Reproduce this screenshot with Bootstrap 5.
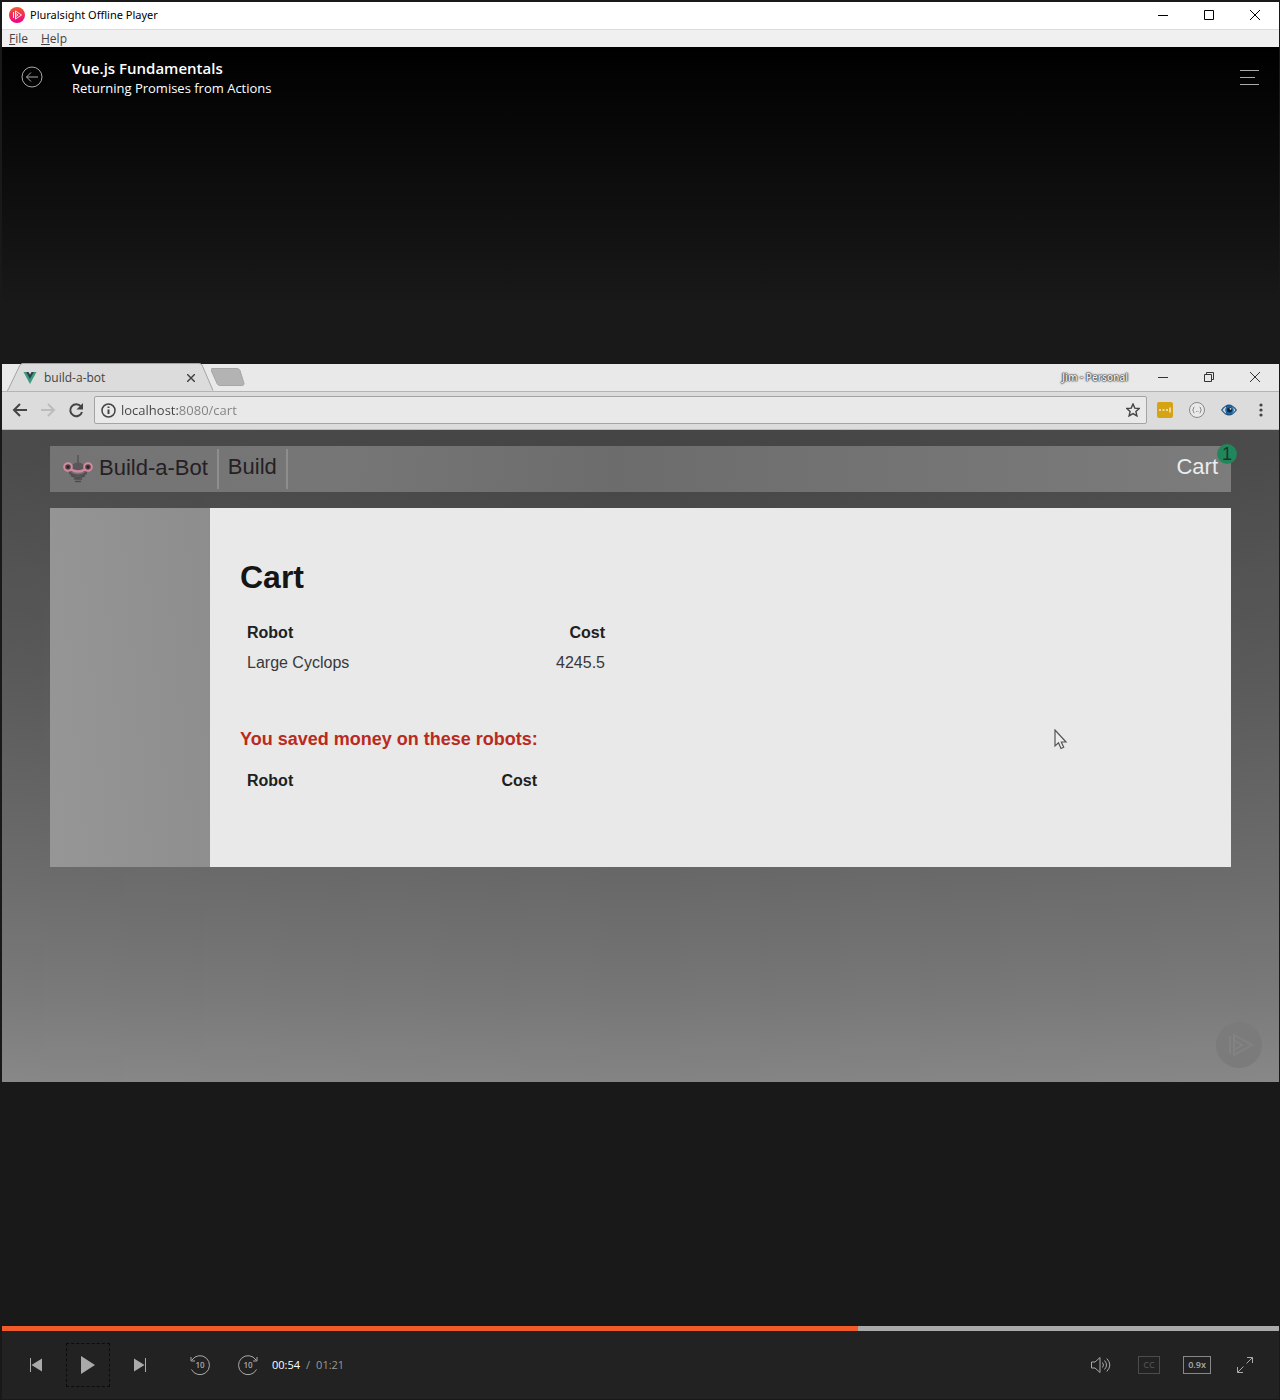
<!DOCTYPE html>
<html lang="en">
<head>
<meta charset="utf-8">
<meta name="viewport" content="width=device-width, initial-scale=1">
<title>Pluralsight Offline Player</title>
<link href="https://cdn.jsdelivr.net/npm/bootstrap@5.3.0/dist/css/bootstrap.min.css" rel="stylesheet">
<style>
  body { background: #191919; font-family: "Open Sans", "Noto Sans", sans-serif; font-size: 12px; line-height: 18px; padding: 2px 1px 1px 2px; }
  svg { display: block; flex: none; }
  button { background: none; border: 0; padding: 0; color: inherit; }
  .ui-btn { display: flex; align-items: center; justify-content: center; flex: none; }

  .titlebar { height: 27px; background: #fff; color: #000; padding: 0 1px 2px 7px; font-family: "Noto Sans", sans-serif; font-size: 11px; gap: 5px; }
  .win-btn { width: 46px; height: 27px; }
  .menubar { height: 18px; background: #f0f0f0; color: #444; border-top: 1px solid #dcdcdc; padding-left: 7px; gap: 13px; line-height: 17px; }
  .menubar a { color: inherit; text-decoration: none; }

  .stage { background: linear-gradient(#000, #191919 260px, #191919); }
  .stage-head, .stage-foot { flex: 1 0 0; }
  .head-row { padding: 11px 18px 0 18px; color: #fff; }
  .course { font-size: 15px; line-height: 20px; font-weight: 600; margin: 0; }
  .clip { font-size: 13px; line-height: 20px; margin: 0; }
  .head-text { margin-left: 28px; }
  .head-icon { width: 24px; height: 24px; margin-top: 7px; }

  .video { aspect-ratio: 16 / 9; background: linear-gradient(90deg, rgba(255,255,255,.03), rgba(255,255,255,0) 50%, rgba(255,255,255,.03)), linear-gradient(#454545, #454545 12%, #565656 45%, #686868 72%, #767676 88%, #848484 100%); }
  .tabstrip { height: 28px; background: #e9e9e9; border-bottom: 1px solid #b4b4b4; color: #444; padding-right: 1px; }
  .tab { width: 204px; height: 28px; margin-left: 5px; padding: 2px 16px 0 16px; }
  .tab-shape { position: absolute; left: 0; top: 0; }
  .tab-body { position: relative; gap: 7px; font-size: 12px; }
  .profile { color: #eee; font-size: 10px; font-weight: 600; text-shadow: 0 0 1px #444, 0 0 1px #444, 0 0 2px #444, 0 0 2px #555; margin-right: 12px; }
  .toolbar { height: 38px; background: #dcdcdc; border-bottom: 1px solid #bbb; color: #444; padding: 0 10px; }
  .tool { width: 16px; height: 16px; }
  .nav-tools { gap: 12px; margin-right: 10px; }
  .ext-tools { gap: 16px; margin-left: 10px; }
  .urlbox { height: 28px; background: #e9e9e9; border: 1px solid #a4a4a4; border-radius: 2px; padding: 0 5px 0 6px; gap: 5px; }
  .urlbox input { border: 0; outline: 0; padding: 0; min-width: 0; font-size: 13px; color: transparent; background: linear-gradient(90deg, #444 58px, #808080 58px); -webkit-background-clip: text; background-clip: text; }

  .page { font-family: "Liberation Sans", Arial, sans-serif; padding: 16px 48px 0; color: #202020; }
  .bot-nav { height: 46px; background: linear-gradient(95deg, #747474, #767676 25%, #6c6c6c 48%, #707070 60%, #7c7c7c); font-size: 22px; line-height: 36px; }
  .bot-nav a { color: #242024; text-decoration: none; }
  .nav-cell { padding: 0 9px; border-right: 2px solid #8e8e8e; height: 40px; }
  .brand-cell { padding-left: 13px; }
  .brand-cell svg { margin: 5px 6px 0 0; }
  .brand-cell span { line-height: 38px; }
  .bot-nav .cart-link { color: #ececec; margin-right: 13px; height: 40px; }
  .count { position: absolute; right: -6px; top: -2px; width: 20px; height: 20px; border-radius: 50%; background: #22865c; color: #16382a; font-size: 18px; line-height: 20px; text-align: center; }
  .bot-main { margin-top: 16px; }
  .side { width: 160px; background: linear-gradient(85deg, #969696, #8d8d8d); }
  .cart-pane { background: #e9e9e9; padding: 50px 30px 71px; }
  .cart-pane h1 { font-size: 32px; line-height: 38px; font-weight: 700; margin: 0 0 22px; color: #151515; }
  .cart-pane h2 { font-size: 18px; line-height: 22px; font-weight: 700; margin: 50px 0 16px; color: #b92a20; }
  .bots { font-size: 16px; line-height: 20px; width: 372px; }
  .bots.saved { width: 304px; }
  .bots th, .bots td { padding: 5px 7px; }
  .bots td { color: #383838; }
  .pointer { position: absolute; left: 82.4%; top: 50.8%; }
  .watermark { position: absolute; right: 17px; bottom: 14px; }

  .stage-foot { display: flex; flex-direction: column; justify-content: flex-end; }
  .seek { appearance: none; -webkit-appearance: none; display: block; width: 100%; height: 5px; margin: 0; background: linear-gradient(90deg, #f15b2a var(--played), #aaa var(--played)); }
  .seek::-webkit-slider-thumb { -webkit-appearance: none; width: 1px; height: 5px; opacity: 0; }
  .controls { height: 68px; background: #222; color: #aaa; padding: 0 12px; }
  .ctl { width: 44px; height: 44px; }
  .ctl.play { border: 1px dashed #0c0c0c; }
  .main-ctl { gap: 8px; }
  .skip-ctl { gap: 4px; margin-left: 16px; }
  .time { gap: 6px; font-size: 11px; margin-left: 2px; color: #999; }
  .time b { font-weight: 400; color: #fff; }
  .boxed { border: 1px solid #888; height: 18px; width: 28px; font-size: 9px; line-height: 16px; font-weight: 600; }
  .boxed.off { width: 22px; color: #4c4c4c; border-color: #4c4c4c; }
</style>
<script src="https://cdn.jsdelivr.net/npm/bootstrap@5.3.0/dist/js/bootstrap.bundle.min.js"></script>
</head>
<body class="d-flex flex-column min-vh-100">
<header class="titlebar d-flex align-items-center">
  <svg width="16" height="16" viewBox="0 0 16 16"><defs><linearGradient id="pg" x1="0" y1="0" x2="0" y2="1"><stop offset="0" stop-color="#f05a28"/><stop offset="1" stop-color="#ec008c"/></linearGradient></defs><circle cx="8" cy="8" r="8" fill="url(#pg)"/><path d="M6.500 4v8L12.500 8zM4.500 5v6M6.500 6.200 9 8 6.500 9.800" fill="none" stroke="#fff" stroke-width=".9"/></svg>
  <span class="me-auto text-nowrap">Pluralsight Offline Player</span>
  <div class="d-flex">
  <button class="ui-btn win-btn" aria-label="Minimize"><svg width="10" height="10"><path d="M0 5.5h10" stroke="#000"/></svg></button>
  <button class="ui-btn win-btn" aria-label="Maximize"><svg width="10" height="10"><path d="M.5.5h9v9h-9z" fill="none" stroke="#000"/></svg></button>
  <button class="ui-btn win-btn" aria-label="Close"><svg width="10" height="10"><path d="m0 0 10 10M10 0 0 10" stroke="#000"/></svg></button>
  </div>
</header>
<nav class="menubar d-flex"><a href="#"><u>F</u>ile</a><a href="#"><u>H</u>elp</a></nav>

<main class="stage flex-grow-1 d-flex flex-column">
  <div class="stage-head">
    <div class="head-row d-flex align-items-start">
      <button class="ui-btn head-icon" aria-label="Back"><svg width="22" height="22" viewBox="0 0 22 22" fill="none" stroke="#aaa"><circle cx="11" cy="11" r="10"/><path d="M5.500 11H17M10 6.500 5.500 11l4.500 4.500"/></svg></button>
      <div class="head-text me-auto"><h1 class="course">Vue.js Fundamentals</h1><p class="clip">Returning Promises from Actions</p></div>
      <button class="ui-btn head-icon" aria-label="Table of contents"><svg width="19" height="16"><path d="M0 1.500h19M0 8.500h15M0 15.500h19" stroke="#aaa"/></svg></button>
    </div>
  </div>

  <section class="video position-relative d-flex flex-column">
    <div class="tabstrip d-flex align-items-center">
      <div class="tab position-relative d-flex align-items-center">
        <svg class="tab-shape" width="208" height="28"><path d="M0 27.500 1 27 13 2Q14 .5 16 .5H192Q194 .5 195 2L206 27.500V28H0Z" fill="#dcdcdc"/><path d="M0 27.500 1 27 13 2Q14 .5 16 .5H192Q194 .5 195 2L206 27.500" fill="none" stroke="#a4a4a4"/></svg>
        <div class="tab-body d-flex align-items-center flex-grow-1">
          <svg width="14" height="12" viewBox="0 0 13 12"><path d="M0 0h3l3.500 6L10 0h3L6.500 12z" fill="#3c9b79"/><path d="M2.600 0h2.400l1.500 2.600L8 0h2.400L6.500 7z" fill="#2c3f50"/></svg>
          <span class="me-auto">build-a-bot</span>
          <button class="ui-btn" aria-label="Close tab"><svg width="8" height="8"><path d="m0 0 8 8M8 0 0 8" stroke="#444" stroke-width="1.500"/></svg></button>
        </div>
      </div>
      <button class="ui-btn me-auto" aria-label="New tab"><svg width="34" height="18"><path d="M1 .5h25q2 0 3 2l4 13q0 2-2 2H9q-2 0-3-2L0 2Q0 .5 1 .5z" fill="#b3b3b3" stroke="#a6a6a6"/></svg></button>
      <span class="profile">Jim - Personal</span>
      <button class="ui-btn win-btn" aria-label="Minimize"><svg width="10" height="10"><path d="M0 5.500h10" stroke="#333"/></svg></button>
      <button class="ui-btn win-btn" aria-label="Restore"><svg width="10" height="10" fill="none" stroke="#333"><path d="M.5 2.500h7v7h-7zM2.500 2.500v-2h7v7h-2"/></svg></button>
      <button class="ui-btn win-btn" aria-label="Close"><svg width="10" height="10"><path d="m0 0 10 10M10 0 0 10" stroke="#333"/></svg></button>
    </div>
    <div class="toolbar d-flex align-items-center">
      <div class="nav-tools d-flex">
        <button class="ui-btn tool" aria-label="Back"><svg width="16" height="16" fill="none" stroke="#444" stroke-width="2"><path d="M15 8H2M8 2 2 8l6 6"/></svg></button>
        <button class="ui-btn tool" aria-label="Forward"><svg width="16" height="16" fill="none" stroke="#bcbcbc" stroke-width="2"><path d="M1 8h13M8 2l6 6-6 6"/></svg></button>
        <button class="ui-btn tool" aria-label="Reload"><svg width="16" height="16"><path d="M13 4.500A6 6 0 1 0 14 10" fill="none" stroke="#444" stroke-width="2"/><path d="M15 1v6.500H8.500z" fill="#444"/></svg></button>
      </div>
      <div class="urlbox d-flex align-items-center flex-grow-1">
        <svg width="15" height="15" fill="none" stroke="#444" stroke-width="1.500"><circle cx="7.500" cy="7.500" r="6.500"/><path d="M7.500 6.500V11M7.500 3.500V5" stroke-width="2"/></svg>
        <input class="flex-grow-1" type="text" aria-label="Address" value="localhost:8080/cart">
        <button class="ui-btn tool" aria-label="Bookmark"><svg width="14" height="14" viewBox="0 0 14 14"><path d="m7 1 1.800 4.100 4.400.4-3.300 3 1 4.400L7 10.600l-3.900 2.300 1-4.400-3.300-3 4.400-.4z" fill="none" stroke="#444" stroke-width="1.400"/></svg></button>
      </div>
      <div class="ext-tools d-flex">
        <button class="ui-btn tool" aria-label="Password manager"><svg width="16" height="16"><rect width="16" height="16" rx="2" fill="#d6a315"/><path d="M2 8h2M5.500 8h2M9 8h2M13 5.500v5" stroke="#f4ead0" stroke-width="1.500"/></svg></button>
        <button class="ui-btn tool" aria-label="JSON viewer"><svg width="16" height="16" fill="none" stroke="#888"><circle cx="8" cy="8" r="7.500" fill="#e9e9e9"/><path d="M5.500 5Q4 5 4.500 7L3.500 8l1 1Q4 11 5.500 11M10.500 5Q12 5 11.500 7l1 1-1 1Q12 11 10.500 11M7 9.500h.8M8.700 9.500h.8"/></svg></button>
        <button class="ui-btn tool" aria-label="Eye extension"><svg width="16" height="12"><path d="M0 6Q8-5 16 6 8 17 0 6z" fill="#275078"/><path d="M1.500 6Q3 3.500 5 2.500v7Q3 8.500 1.500 6M14.500 6Q13 3.500 11 2.500v7Q13 8.500 14.500 6" fill="#ccd7e0"/><circle cx="8.500" cy="6" r="4.300" fill="#1d68a7"/><circle cx="8.500" cy="6" r="2.500" fill="#10283e"/><circle cx="9.500" cy="4.800" r=".9" fill="#ddd"/></svg></button>
        <button class="ui-btn tool" aria-label="Menu"><svg width="4" height="14" fill="#444"><circle cx="2" cy="2" r="1.600"/><circle cx="2" cy="7" r="1.600"/><circle cx="2" cy="12" r="1.600"/></svg></button>
      </div>
    </div>

    <div class="page">
      <nav class="bot-nav d-flex align-items-center position-relative">
        <a class="nav-cell brand-cell d-flex" href="#">
          <svg width="30" height="30" viewBox="0 0 30 30"><path d="M15 1v9" stroke="#454545"/><path d="M9 12.500Q10 8.500 15 8.500t6 4l4 1v4H5v-4z" fill="#5a565b"/><path d="M6 17Q15 24 24 17v3Q15 25 6 20z" fill="#545057"/><path d="M8 15.500q7 4 14 0" fill="none" stroke="#cf8b9c" stroke-width="2.500"/><circle cx="5" cy="13" r="3.800" fill="#514048" stroke="#d58b9d" stroke-width="2"/><circle cx="25" cy="13" r="3.800" fill="#514048" stroke="#d58b9d" stroke-width="2"/><circle cx="5" cy="13" r="1.200" fill="#222"/><circle cx="25" cy="13" r="1.200" fill="#222"/><path d="M8 21.500q7 4 14 0M11 25h8M12 27.500h6" fill="none" stroke="#4c4c4c" stroke-width="1.500"/></svg>
          <span>Build-a-Bot</span></a>
        <a class="nav-cell me-auto" href="#">Build</a>
        <a class="cart-link" href="#">Cart</a>
        <span class="count">1</span>
      </nav>
      <div class="bot-main d-flex">
        <aside class="side flex-shrink-0"></aside>
        <article class="cart-pane flex-grow-1">
          <h1>Cart</h1>
          <table class="bots">
            <thead><tr><th>Robot</th><th class="text-end">Cost</th></tr></thead>
            <tbody><tr><td>Large Cyclops</td><td class="text-end">4245.5</td></tr></tbody>
          </table>
          <h2>You saved money on these robots:</h2>
          <table class="bots saved"><thead><tr><th>Robot</th><th class="text-end">Cost</th></tr></thead></table>
        </article>
      </div>
    </div>
    <svg class="pointer" width="14" height="22" viewBox="0 0 14 22"><path d="M1 1v16l3.500-3.200L7 19.500l2.700-1.200-2.400-5.300H12z" fill="#eee" stroke="#555" stroke-width="1.200"/></svg>
    <svg class="watermark" width="46" height="46" viewBox="0 0 46 46"><circle cx="23" cy="23" r="23" fill="#7b7b7b"/><path d="M18 13v20l18-10zM14 14v18M18 18l8 5-8 5" fill="none" stroke="#828282" stroke-width="2"/></svg>
  </section>

  <div class="stage-foot">
    <input class="seek" type="range" min="0" max="100" value="67" aria-label="Seek" style="--played:67%">
    <div class="controls d-flex align-items-center">
      <div class="main-ctl d-flex">
        <button class="ui-btn ctl" aria-label="Previous clip"><svg width="12" height="14" fill="#aaa"><path d="M0 0h1v14H0zM12 .5v13L1.500 7z"/></svg></button>
        <button class="ui-btn ctl play" aria-label="Play"><svg width="14" height="18" fill="#aaa"><path d="M0 0v18l14-9z"/></svg></button>
        <button class="ui-btn ctl" aria-label="Next clip"><svg width="12" height="14" fill="#aaa"><path d="M11 0h1v14h-1zM0 .5v13L10.500 7z"/></svg></button>
      </div>
      <div class="skip-ctl d-flex">
        <button class="ui-btn ctl" aria-label="Back 10 seconds"><svg width="20" height="20" viewBox="0 0 20 20" fill="none" stroke="#aaa"><path d="M2 5A9.500 9.500 0 1 1 1.500 14.500M1 2v4h4"/><text x="10" y="13" text-anchor="middle" font-size="8" font-weight="600" fill="#aaa" stroke="none">10</text></svg></button>
        <button class="ui-btn ctl" aria-label="Forward 10 seconds"><svg width="20" height="20" viewBox="0 0 20 20" fill="none" stroke="#aaa"><path d="M18 5A9.500 9.500 0 1 0 18.500 14.500M19 2v4h-4"/><text x="10" y="13" text-anchor="middle" font-size="8" font-weight="600" fill="#aaa" stroke="none">10</text></svg></button>
      </div>
      <div class="time d-flex me-auto"><b>00:54</b><span>/</span><span>01:21</span></div>
      <div class="d-flex gap-1">
        <button class="ui-btn ctl" aria-label="Volume"><svg width="20" height="16" fill="none" stroke="#aaa"><path d="M.5 5v6H4l5 4.500V.5L4 5zM11.500 5.500q2 2.500 0 5M13.500 3.500q4 4.500 0 9M15.800 1.500q6 6.500 0 13"/></svg></button>
        <button class="ui-btn ctl" aria-label="Captions"><span class="boxed off">CC</span></button>
        <button class="ui-btn ctl" aria-label="Playback speed"><span class="boxed">0.9x</span></button>
        <button class="ui-btn ctl" aria-label="Full screen"><svg width="16" height="16" fill="none" stroke="#aaa"><path d="M9.500 6.500l6-6M10 .5h5.500V6M6.500 9.500l-6 6M.5 10v5.500H6"/></svg></button>
      </div>
    </div>
  </div>
</main>
</body>
</html>
